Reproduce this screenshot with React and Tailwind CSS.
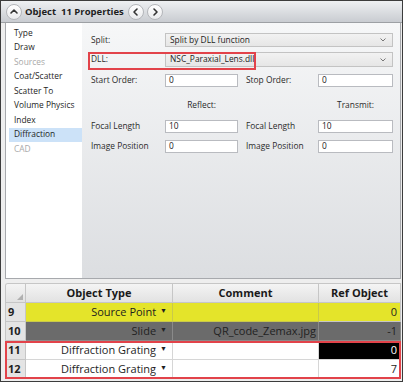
import React from "react";

const FONT = { fontFamily: '"Open Sans", "Noto Sans", sans-serif' };

function CircleBtn({ dir, className = "" }) {
  const paths = {
    up: "M3 7 L6 4 L9 7",
    left: "M7 3 L4 6 L7 9",
    right: "M5 3 L8 6 L5 9",
  };
  return (
    <div
      className={`w-[16px] h-[16px] rounded-full border border-[#b4b6ba] bg-gradient-to-b from-white to-[#e9eaec] flex items-center justify-center shrink-0 ${className}`}
    >
      <svg width="12" height="12" viewBox="0 0 12 12">
        <path d={paths[dir]} fill="none" stroke="#333" strokeWidth="1.6" strokeLinecap="round" strokeLinejoin="round" />
      </svg>
    </div>
  );
}

function Chevron() {
  return (
    <svg width="8" height="6" viewBox="0 0 8 6" className="shrink-0">
      <path d="M1.5 1.5 L4 4 L6.5 1.5" fill="none" stroke="#777" strokeWidth="1" />
    </svg>
  );
}

function Select({ value, h = "h-[14px]" }) {
  return (
    <div className={`${h} flex items-center justify-between border border-[#c3c3c3] bg-gradient-to-b from-[#f2f2f2] to-[#e6e6e6] pl-[4px] pr-[5px] text-[8.4px] text-[#222]`}>
      <span className="leading-none">{value}</span>
      <Chevron />
    </div>
  );
}

function Input({ value }) {
  return (
    <div className="h-[13px] flex items-center border border-[#b9bbc0] bg-white pl-[3px] text-[8.4px] text-[#222]">
      <span className="leading-none">{value}</span>
    </div>
  );
}

const listItems = [
  { t: "Type" },
  { t: "Draw" },
  { t: "Sources", d: true },
  { t: "Coat/Scatter" },
  { t: "Scatter To" },
  { t: "Volume Physics" },
  { t: "Index" },
  { t: "Diffraction", sel: true },
  { t: "CAD", d: true },
];

function Tri() {
  return <span className="inline-block text-[7px] ml-[4px] relative top-[-1px]">▼</span>;
}

const COLS = "grid grid-cols-[74px_73px_8px_72px_1fr] items-center";

export default function App() {
  return (
    <div style={FONT} className="relative w-[403px] h-[382px] border border-[#3c3c3c] bg-[#eeeeee] flex flex-col overflow-hidden text-[#1e1e1e]">
      {/* header */}
      <div className="h-[22px] shrink-0 flex items-center border-b border-[#9da0a4] bg-gradient-to-b from-[#eef0f2] to-[#c9ccd1] pl-[5px]">
        <CircleBtn dir="up" />
        <span className="ml-[3px] font-bold text-[9.5px] leading-none whitespace-pre">Object  11 Properties</span>
        <CircleBtn dir="left" className="ml-[4px]" />
        <CircleBtn dir="right" className="ml-[3px]" />
      </div>

      {/* panels */}
      <div className="h-[256px] shrink-0 flex ml-[4px] mr-[1px] border-l border-r border-b border-[#a7a9ad]">
        <div className="w-[76px] shrink-0 bg-white pt-[3px] pl-[3px]">
          {listItems.map((it) => (
            <div
              key={it.t}
              className={`h-[14.5px] flex items-center pl-[5px] text-[8.4px] whitespace-nowrap ${it.sel ? "bg-[#cce2f8]" : ""} ${it.d ? "text-[#a9a9a9]" : "text-[#1e1e1e]"}`}
            >
              {it.t}
            </div>
          ))}
        </div>
        <div className="relative flex-1 bg-gradient-to-b from-[#f6f7f8] to-[#dcdee1] pl-[9px] pr-[7px] pt-[10px] text-[8.4px] text-[#2a2a2a]">
          <div className={COLS}>
            <div className="h-[14px] flex items-center">Split:</div>
            <div className="col-span-4">
              <Select value="Split by DLL function" />
            </div>
          </div>
          <div className={`${COLS} mt-[5px]`}>
            <div className="h-[15px] flex items-center">DLL:</div>
            <div className="col-span-4">
              <Select value="NSC_Paraxial_Lens.dll" h="h-[15px]" />
            </div>
          </div>
          <div className={`${COLS} mt-[7px]`}>
            <div>Start Order:</div>
            <Input value="0" />
            <div />
            <div>Stop Order:</div>
            <Input value="0" />
          </div>
          <div className={`${COLS} mt-[12px]`}>
            <div />
            <div className="text-center">Reflect:</div>
            <div />
            <div />
            <div className="text-center">Transmit:</div>
          </div>
          <div className={`${COLS} mt-[8px]`}>
            <div>Focal Length</div>
            <Input value="10" />
            <div />
            <div>Focal Length</div>
            <Input value="10" />
          </div>
          <div className={`${COLS} mt-[7px]`}>
            <div>Image Position</div>
            <Input value="0" />
            <div />
            <div>Image Position</div>
            <Input value="0" />
          </div>
          {/* red annotation */}
          <div className="absolute left-[6px] top-[29px] w-[168px] h-[18px] border-2 border-[#e2434a]" />
        </div>
      </div>

      {/* grid */}
      <div className="flex-1 pl-[4px] mr-[1px] pt-[4px]">
        <div className="border-l border-t border-[#c6c6c6] rounded-tl-[3px] overflow-hidden">
          {/* header row */}
          <div className="flex h-[19px] text-[11px] font-bold text-[#1a1a1a]">
            <div className="relative w-[20px] shrink-0 border-r border-b border-[#c6c6c6] bg-gradient-to-b from-[#f4f4f4] to-[#e2e2e2]">
              <svg width="6" height="6" viewBox="0 0 6 6" className="absolute right-[2px] bottom-[2px]">
                <path d="M6 0 L6 6 L0 6 Z" fill="#b0b0b0" />
              </svg>
            </div>
            <div className="w-[147px] shrink-0 flex items-center justify-center border-r border-b border-[#c6c6c6] bg-gradient-to-b from-[#f4f4f4] to-[#e2e2e2]">Object Type</div>
            <div className="w-[146px] shrink-0 flex items-center justify-center border-r border-b border-[#c6c6c6] bg-gradient-to-b from-[#f4f4f4] to-[#e2e2e2]">Comment</div>
            <div className="w-[82px] shrink-0 flex items-center justify-center border-r border-b border-[#c6c6c6] bg-gradient-to-b from-[#f4f4f4] to-[#e2e2e2]">Ref Object</div>
          </div>
          {/* row 9 */}
          <div className="flex h-[19px] text-[11px]">
            <div className="w-[20px] shrink-0 flex items-center pl-[2px] font-bold border-r border-b border-[#c6c6c6] bg-[#e4e4e4]">9</div>
            <div className="w-[147px] shrink-0 flex items-center justify-end pr-[5px] border-r border-b border-[#c9c94a] bg-[#e4e42a]">Source Point<Tri /></div>
            <div className="w-[146px] shrink-0 border-r border-b border-[#c9c94a] bg-[#e4e42a]" />
            <div className="w-[82px] shrink-0 flex items-center justify-end pr-[3px] border-r border-b border-[#c6c6c6] bg-[#e4e42a]">0</div>
          </div>
          {/* row 10 */}
          <div className="flex h-[19px] text-[11px] text-[#222]">
            <div className="w-[20px] shrink-0 flex items-center pl-[2px] font-bold border-r border-b border-[#c6c6c6] bg-[#e4e4e4]">10</div>
            <div className="w-[147px] shrink-0 flex items-center justify-end pr-[5px] border-r border-b border-[#8a8a8a] bg-[#6b6b6b]">Slide<Tri /></div>
            <div className="w-[146px] shrink-0 flex items-center justify-end pr-[2px] border-r border-b border-[#8a8a8a] bg-[#6b6b6b]">QR_code_Zemax.jpg</div>
            <div className="w-[82px] shrink-0 flex items-center justify-end pr-[3px] border-r border-b border-[#8a8a8a] bg-[#6b6b6b]">-1</div>
          </div>
          {/* row 11 */}
          <div className="flex h-[19px] text-[11px]">
            <div className="w-[20px] shrink-0 flex items-center pl-[2px] font-bold border-r border-b border-[#c6c6c6] bg-[#e4e4e4]">11</div>
            <div className="w-[147px] shrink-0 flex items-center justify-end pr-[5px] border-r border-b border-[#d6d6d6] bg-white">Diffraction Grating<Tri /></div>
            <div className="w-[146px] shrink-0 border-r border-b border-[#d6d6d6] bg-white" />
            <div className="w-[82px] shrink-0 flex items-center justify-end pr-[3px] border-r border-b border-[#d6d6d6] bg-black text-white">0</div>
          </div>
          {/* row 12 */}
          <div className="flex h-[19px] text-[11px]">
            <div className="w-[20px] shrink-0 flex items-center pl-[2px] font-bold border-r border-b border-[#c6c6c6] bg-[#e4e4e4]">12</div>
            <div className="w-[147px] shrink-0 flex items-center justify-end pr-[5px] border-r border-b border-[#d6d6d6] bg-white">Diffraction Grating<Tri /></div>
            <div className="w-[146px] shrink-0 border-r border-b border-[#d6d6d6] bg-white" />
            <div className="w-[82px] shrink-0 flex items-center justify-end pr-[3px] border-r border-b border-[#d6d6d6] bg-white">7</div>
          </div>
        </div>
      </div>
      {/* red annotation around rows 11-12 */}
      <div className="absolute left-[4px] top-[340px] w-[396px] h-[38px] border-2 border-[#e2434a]" />
    </div>
  );
}
